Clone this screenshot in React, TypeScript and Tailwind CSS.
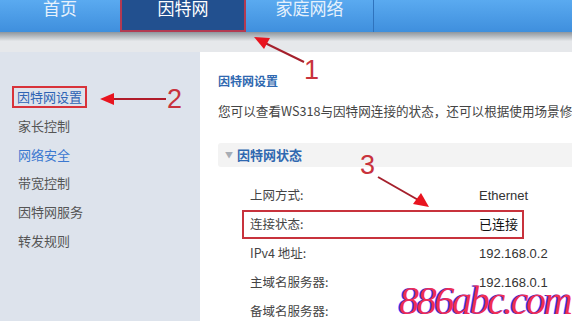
const cjk = { fontFamily: '"Noto Sans CJK SC", "Liberation Sans", sans-serif' };
const latin = { fontFamily: '"Liberation Sans", "Noto Sans CJK SC", sans-serif' };

const tabs = [
  { label: '首页', w: 'w-[120px]', active: false },
  { label: '因特网', w: 'w-[126px]', active: true },
  { label: '家庭网络', w: 'w-[127px]', active: false },
];

const menu = [
  { label: '因特网设置', color: 'text-[#2f64b5]', boxed: true },
  { label: '家长控制', color: 'text-[#555]' },
  { label: '网络安全', color: 'text-[#3b78d0]' },
  { label: '带宽控制', color: 'text-[#555]' },
  { label: '因特网服务', color: 'text-[#555]' },
  { label: '转发规则', color: 'text-[#555]' },
];

const rows = [
  { label: '上网方式:', value: 'Ethernet' },
  { label: '连接状态:', value: '已连接', boxed: true },
  { label: 'IPv4 地址:', value: '192.168.0.2' },
  { label: '主域名服务器:', value: '192.168.0.1' },
  { label: '备域名服务器:', value: '' },
];

function Annotations() {
  return (
    <svg className="absolute inset-0 pointer-events-none" width={572} height={321}>
      {/* 1 */}
      <line x1={304} y1={62} x2={263} y2={42} stroke="#a5202c" strokeWidth={2} />
      <polygon points="254,37 270,38 264,49" fill="#e8141f" />
      {/* 2 */}
      <line x1={166} y1={99} x2={112} y2={99} stroke="#b01c2a" strokeWidth={2} />
      <polygon points="100,99 114,93 114,105" fill="#e8141f" />
      {/* 3 */}
      <line x1={378} y1={177} x2={420} y2={201} stroke="#a5202c" strokeWidth={2} />
      <polygon points="429,207 413,204 421,193" fill="#e8141f" />
    </svg>
  );
}

export default function App() {
  return (
    <div className="relative w-[572px] h-[321px] overflow-hidden bg-[#dde3ec]" style={cjk}>
      <div className="flex h-[32px] bg-gradient-to-b from-[#5aaaf0] to-[#3f8fdd]">
        {tabs.map((t) => (
          <div
            key={t.label}
            className={`${t.w} h-full flex justify-center text-[17px] leading-none ${
              t.active ? 'bg-[#22508f] border-2 border-t-0 border-[#b23a52] text-white' : 'text-[#e6f1fc]'
            }`}
          >
            <span className="-mt-[1px]">{t.label}</span>
          </div>
        ))}
        <div className="w-px h-full bg-[#2f73bd]" />
        <div className="flex-1" />
      </div>
      <div className="h-[9px] bg-gradient-to-b from-[#8e969e] to-[#e4e6e9]" />
      <div className="h-[11px] bg-[#e6e8eb]" />

      <div className="flex h-[269px]">
        <div className="w-[200px] shrink-0 pt-[31px]">
          {menu.map((m) => (
            <div key={m.label} className="h-[28.6px] flex items-center">
              {m.boxed ? (
                <span className={`ml-[12px] px-[3px] leading-[18px] border-2 border-[#d8333a] text-[13px] ${m.color}`}>
                  {m.label}
                </span>
              ) : (
                <span className={`ml-[18px] text-[13px] ${m.color}`}>{m.label}</span>
              )}
            </div>
          ))}
        </div>

        <div className="flex-1 bg-white pl-[18px] pt-[20px] overflow-hidden">
          <div className="text-[12px] font-bold text-[#2f68b0] h-[18px] leading-[18px]">因特网设置</div>
          <div className="mt-[12px] text-[12.6px] text-[#444] whitespace-nowrap h-[18px] leading-[18px]">
            您可以查看WS318与因特网连接的状态，还可以根据使用场景修改因特网设置
          </div>
          <div className="mt-[23px] h-[24px] bg-[#f3f3f3] rounded-l-[3px] flex items-center pl-[7px]">
            <span className="text-[8px] text-[#a7adb5] mr-[4px]">▼</span>
            <span className="text-[13px] font-bold text-[#2f68b0]">因特网状态</span>
          </div>
          <div className="mt-[14px]">
            {rows.map((r) => (
              <div
                key={r.label}
                className={`ml-[24px] w-[282px] h-[29px] flex items-center pl-[6px] border-2 ${
                  r.boxed ? 'border-[#c8323c]' : 'border-transparent'
                }`}
              >
                <span className="w-[229px] shrink-0 text-[12.5px] text-[#444]">{r.label}</span>
                <span
                  className={`shrink-0 whitespace-nowrap text-[13px] ${r.boxed ? 'text-[#111]' : 'text-[#333]'}`}
                  style={latin}
                >
                  {r.value}
                </span>
              </div>
            ))}
          </div>
        </div>
      </div>

      <Annotations />
      <span className="absolute left-[304px] top-[57px] text-[27px] leading-none text-[#c8323c] font-light" style={{ fontFamily: '"Liberation Sans", sans-serif' }}>1</span>
      <span className="absolute left-[167px] top-[86px] text-[27px] leading-none text-[#c8323c] font-light" style={{ fontFamily: '"Liberation Sans", sans-serif' }}>2</span>
      <span className="absolute left-[360px] top-[152px] text-[27px] leading-none text-[#c8323c] font-light" style={{ fontFamily: '"Liberation Sans", sans-serif' }}>3</span>
      <span
        className="absolute left-[399px] top-[281px] text-[40px] leading-none italic tracking-[-2.3px] text-[#ef2d55]"
        style={{ fontFamily: '"Liberation Serif", serif', textShadow: '-1.5px 0 #3a3aff' }}
      >
        886abc.com
      </span>
    </div>
  );
}
